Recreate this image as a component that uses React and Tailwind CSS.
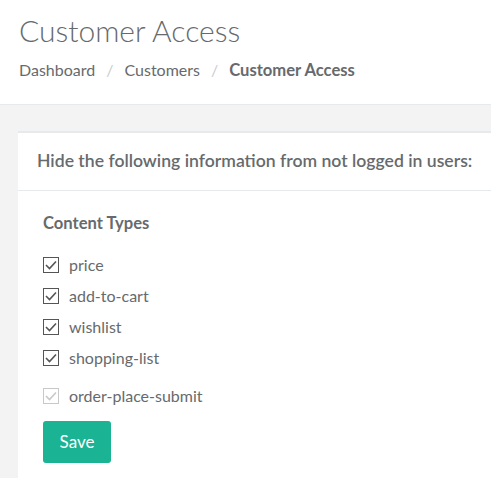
import React from "react";

function Box({ disabled }) {
  return (
    <svg width="16" height="16" viewBox="0 0 16 16" className="shrink-0">
      <rect x="0.5" y="0.5" width="15" height="15" fill="#fff" stroke={disabled ? "#c8c8c8" : "#555"} strokeWidth="1" />
      <path d="M3 8 L6.5 11.5 L13 4.5" fill="none" stroke={disabled ? "#c8c8c8" : "#555"} strokeWidth="1.6" />
    </svg>
  );
}

const items = ["price", "add-to-cart", "wishlist", "shopping-list"];

export default function App() {
  return (
    <div className="w-[491px] h-[478px] overflow-hidden bg-[#f3f3f4] text-[#676a6c]" style={{ fontFamily: "Lato, 'Open Sans', sans-serif" }}>
      <div className="bg-white border-b border-[#e7eaec] h-[105px] pl-[19px] pt-[11px]">
        <h1 className="text-[30px] font-light leading-[38px] text-[#676a6c]">Customer Access</h1>
        <div className="flex items-center text-[16px] mt-[11px] leading-[20px]">
          <span>Dashboard</span>
          <span className="mx-[11px] text-[#ccc]">/</span>
          <span>Customers</span>
          <span className="mx-[11px] text-[#ccc]">/</span>
          <span className="font-bold text-[16.6px]">Customer Access</span>
        </div>
      </div>
      <div className="pt-[26px] pl-[18px]">
        <div className="bg-white w-[600px]">
          <div className="border-t-2 border-[#e7eaec] border-b h-[60px] flex items-center pl-[19px]">
            <span className="text-[17.6px] font-semibold">Hide the following information from not logged in users:</span>
          </div>
          <div className="pl-[25px] pt-[22px] pb-[20px]">
            <div className="text-[16.6px] font-bold leading-[20px]">Content Types</div>
            <div className="mt-[22px] flex flex-col gap-[11px]">
              {items.map((t) => (
                <label key={t} className="flex items-center gap-[10px] text-[16px] leading-[20px]">
                  <Box />
                  <span>{t}</span>
                </label>
              ))}
            </div>
            <label className="flex items-center gap-[10px] text-[16px] leading-[20px] mt-[18px]">
              <Box disabled />
              <span>order-place-submit</span>
            </label>
            <button className="mt-[15px] bg-[#1ab394] text-white text-[17px] rounded-[3px] w-[68px] h-[42px]">Save</button>
          </div>
        </div>
      </div>
    </div>
  );
}
